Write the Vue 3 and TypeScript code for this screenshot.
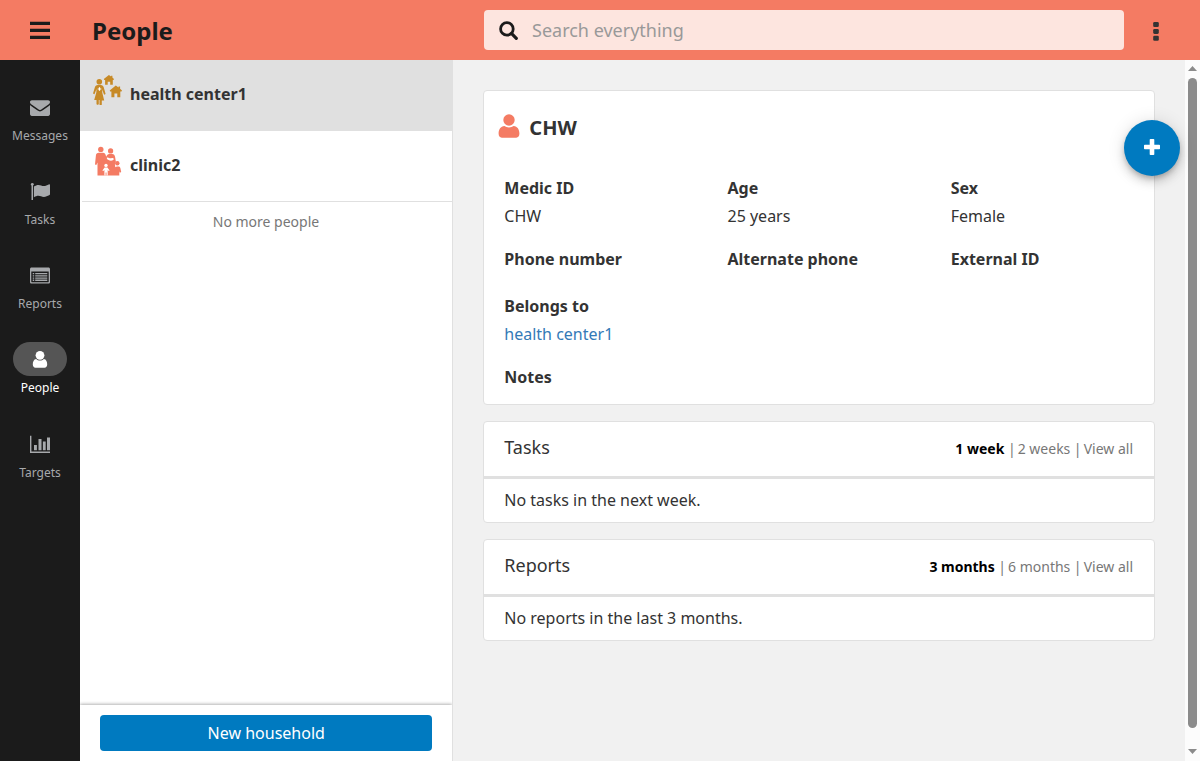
<script setup lang="ts">
interface NavItem { id: string; label: string }
interface Field { label: string; value?: string; link?: boolean }
interface Panel { title: string; filters: string[]; empty: string }

const nav: NavItem[] = [
  { id: 'messages', label: 'Messages' },
  { id: 'tasks', label: 'Tasks' },
  { id: 'reports', label: 'Reports' },
  { id: 'people', label: 'People' },
  { id: 'targets', label: 'Targets' },
]
const active = 'people'

const rows: Field[][] = [
  [
    { label: 'Medic ID', value: 'CHW' },
    { label: 'Age', value: '25 years' },
    { label: 'Sex', value: 'Female' },
  ],
  [{ label: 'Phone number' }, { label: 'Alternate phone' }, { label: 'External ID' }],
  [{ label: 'Belongs to', value: 'health center1', link: true }],
  [{ label: 'Notes' }],
]

const panels: Panel[] = [
  { title: 'Tasks', filters: ['1 week', '2 weeks', 'View all'], empty: 'No tasks in the next week.' },
  { title: 'Reports', filters: ['3 months', '6 months', 'View all'], empty: 'No reports in the last 3 months.' },
]
</script>

<template>
  <div class="app">
    <header class="header">
      <button class="menu" aria-label="Menu">
        <svg width="20" height="18" viewBox="0 0 20 18"><path d="M0 .7h20v3.200H0zM0 7.700h20v3.200H0zM0 14.700h20v3.200H0z" fill="#1b1b1b" /></svg>
      </button>
      <h1 class="title">People</h1>
      <div class="search">
        <svg width="20" height="20" viewBox="0 0 20 20" fill="none" stroke="#1b1b1b"><circle cx="7.900" cy="8.900" r="6.300" stroke-width="2.800" /><path d="M12.700 13.700l4.600 4.600" stroke-width="3.200" stroke-linecap="round" /></svg>
        <span class="placeholder">Search everything</span>
      </div>
      <button class="more" aria-label="More">
        <svg width="6" height="20" viewBox="0 0 6 20" fill="#333"><rect x=".2" y="1" width="5.600" height="5" rx="1.300" /><rect x=".2" y="7.900" width="5.600" height="5" rx="1.300" /><rect x=".2" y="14.800" width="5.600" height="5" rx="1.300" /></svg>
      </button>
    </header>

    <div class="body">
      <nav class="sidebar">
        <a v-for="item in nav" :key="item.id" class="nav-item" :class="{ active: item.id === active }">
          <span class="pill">
            <svg v-if="item.id === 'messages'" width="20" height="20" viewBox="0 0 20 20" fill="currentColor"><path d="M0 4.200C0 3 .8 2.300 1.900 2.300h16.200c1.100 0 1.900.7 1.900 1.800 0 1-.7 1.900-1.600 2.500l-6.400 4.500c-.7.500-1.300.9-2 .9s-1.300-.4-2-.9L1.600 6.600C.8 6 0 5.100 0 4.200zM0 6.900c.3.400.7.700 1.100 1l6.100 4.300c.9.700 1.800 1.200 2.800 1.200s1.900-.5 2.800-1.200l6.100-4.300c.4-.3.800-.6 1.100-1v9.200c0 1-.8 1.800-1.800 1.800H1.800c-1 0-1.800-.8-1.800-1.800z" /></svg>
            <svg v-else-if="item.id === 'tasks'" width="20" height="20" viewBox="0 0 20 20" fill="currentColor"><circle cx="2.300" cy="2.300" r="1.400" /><path d="M1.500 2.500h1.500v15.500h-1.500zM3.900 4.400c1.500-.9 3-1.500 4.600-1.500 2.100 0 3.300 1.200 5.200 1.200 1.800 0 3.600-1 5-1.700.8-.4 1.300 0 1.300.7v9c0 .7-.3.900-.9 1.200-1.500.8-3.300 1.600-5.200 1.600-2.300 0-3.400-1.200-5.600-1.200-1.400 0-2.600.5-4.400 1.500z" /></svg>
            <svg v-else-if="item.id === 'reports'" width="20" height="20" viewBox="0 0 20 20"><path fill="currentColor" fill-rule="evenodd" d="M1.600 1.500h16.800c.9 0 1.600.7 1.600 1.600v12.800c0 .9-.7 1.600-1.600 1.600H1.600C.7 17.500 0 16.800 0 15.900V3.100c0-.9.700-1.600 1.600-1.600zM1.300 5.500v10.200c0 .3.200.5.500.5h16.400c.3 0 .5-.2.500-.5V5.500zM2.700 7h1.500v1.300H2.700zM5.200 7h12.100v1.300H5.200zM2.700 9.200h1.500v1.300H2.700zM5.200 9.200h12.100v1.300H5.200zM2.700 11.400h1.500v1.300H2.700zM5.200 11.400h12.100v1.300H5.200zM2.700 13.600h1.500v1.300H2.700zM5.200 13.600h12.100v1.300H5.200z" /></svg>
            <svg v-else-if="item.id === 'people'" width="20" height="20" viewBox="0 0 20 20" fill="currentColor"><circle cx="10" cy="5.300" r="4.400" /><path d="M6.200 9.100C3.700 9.400 2.800 12 2.800 14.600c0 2 1.100 3.200 2.700 3.200h9c1.600 0 2.700-1.200 2.700-3.200 0-2.600-.9-5.200-3.400-5.500-1 1.100-2.300 1.500-3.800 1.500s-2.800-.4-3.800-1.500z" /></svg>
            <svg v-else width="20" height="20" viewBox="0 0 20 20" fill="currentColor"><path d="M0 .8h1.400v15.700H20v1.400H0zM4 10h2.900v5.200H4zM8.500 4h3v11.200h-3zM12.900 6.600h2.800v8.600h-2.800zM17 2.400h3v12.800h-3z" /></svg>
          </span>
          <span class="nav-label">{{ item.label }}</span>
        </a>
      </nav>

      <section class="list">
        <ul class="rows">
          <li class="row selected">
            <svg class="row-icon" width="30" height="30" viewBox="0 0 30 30" fill="#c78a27">
              <circle cx="7.300" cy="6.700" r="2.800" />
              <path d="M5.800 10h3c1.700 0 2.500.9 3 2.600l1.800 6.400-1.500.7-2-5.200.2 3.300 1.900 7.600H9.800v4.100c0 1-2.300 1-2.300 0V25h-.7v4.100c0 1-2.300 1-2.300 0V25H2.200l2.100-7.600.2-3.300-2 5.200-1.500-.7 1.800-6C3.300 10.900 4.100 10 5.800 10z" />
              <path d="M6.900 12.200h1.200v1.200h1.200v1.200H8.100v1.200H6.900v-1.200H5.700v-1.200h1.200z" fill="#fff" />
              <path d="M16.900 0l2.200 1.600V.8h1.300v1.700L22 4.100l-.5.900h-.7v4.800h-2.600V6.700h-2.500v3.100h-2.600V5h-.8l-.5-.9zM23.800 10.400l2.700 2v-1h1.600v2.300l1.900 1.800-.5 1h-1.200v5.800h-3v-3.700h-2.900v3.700h-3v-5.800h-1.200l-.5-1z" />
            </svg>
            <span>health center1</span>
          </li>
          <li class="row">
            <svg class="row-icon" width="30" height="30" viewBox="0 0 30 30">
              <g fill="#f47b63">
                <circle cx="8.800" cy="3.400" r="2.700" /><circle cx="18.600" cy="4.900" r="2.600" /><circle cx="25.300" cy="17.200" r="2.200" />
                <path d="M7 6.700h4c1.600 0 2.400.9 2.700 2.500l.7 1.500c.5-1.700 1.300-2.700 2.900-2.700h2.800c1.900 0 2.600 1 3 3l.8 5-1 1.900.4 3.400 1.500-.9h1.600c1.200 0 1.700.6 2 1.800l.8 3.900-1.300.6-.6-1.500v4.400H5.500v-13L4.300 19 3 18.500l.9-9C4.100 7.700 4.900 6.700 7 6.700z" />
              </g>
              <g fill="#fff"><circle cx="14" cy="19.400" r="1.700" /><path d="M12.600 21.500h2.800l2.200 3-.8.600-1.100-1.100v5.600h-1.200v-3h-.9v3h-1.200V24l-1.200 1.100-.8-.6z" /><path d="M14.900 11.600c1.700-.4 2.500.9 3.900.7l1.700-.3c1.500-.1 1.700 1.700.3 2.300-2.200 1.200-5-.3-5.900-1.500z" /></g>
            </svg>
            <span>clinic2</span>
          </li>
        </ul>
        <p class="no-more">No more people</p>
        <footer class="actions"><button class="new-btn">New household</button></footer>
      </section>

      <main class="content">
        <article class="card person">
          <div class="person-head">
            <svg width="22" height="24" viewBox="0 0 22 24" fill="#f47b63"><circle cx="11" cy="6" r="5.700" /><path d="M6.400 12C2.600 12.200.6 15.500.6 19.600c0 2.700 1.100 4.100 3.200 4.100h14.400c2.100 0 3.200-1.400 3.200-4.100 0-4.100-2-7.400-5.800-7.600-1.300.9-2.700 1.400-4.600 1.400s-3.300-.5-4.600-1.400z" /></svg>
            <h2>CHW</h2>
          </div>
          <div v-for="(row, i) in rows" :key="i" class="fields" :class="'fields-' + i">
            <div v-for="f in row" :key="f.label" class="field">
              <label>{{ f.label }}</label>
              <p v-if="f.value" :class="{ link: f.link }">{{ f.value }}</p>
            </div>
          </div>
        </article>

        <article v-for="p in panels" :key="p.title" class="card panel">
          <div class="panel-head">
            <h3>{{ p.title }}</h3>
            <div class="filters">
              <template v-for="(f, i) in p.filters" :key="f"><span v-if="i" class="sep">|</span><a :class="{ on: i === 0 }">{{ f }}</a></template>
            </div>
          </div>
          <p class="empty">{{ p.empty }}</p>
        </article>
      </main>

      <div class="scrollbar">
        <svg width="9" height="5" viewBox="0 0 9 5"><path d="M4.500 0L9 5H0z" fill="#8b8b8b" /></svg>
        <div class="thumb"></div>
        <svg width="9" height="5" viewBox="0 0 9 5"><path d="M0 0h9L4.500 5z" fill="#8b8b8b" /></svg>
      </div>
    </div>

    <button class="fab" aria-label="Add">
      <svg width="16" height="16" viewBox="0 0 16 16"><path d="M5.700.8q0-.8.800-.8h3q.8 0 .8.800v4.900h4.900q.8 0 .8.800v3q0 .8-.8.8h-4.900v4.900q0 .8-.8.8h-3q-.8 0-.8-.8v-4.900H.8q-.8 0-.8-.8v-3q0-.8.8-.8h4.900z" fill="#fff" /></svg>
    </button>
  </div>
</template>

<style>
html, body { margin: 0; overflow: hidden; }
</style>

<style scoped>
* { box-sizing: border-box; }
h1, h2, h3, p, ul { margin: 0; padding: 0; }
svg { display: block; flex: none; }
button { border: 0; padding: 0; background: none; font: inherit; color: inherit; }
.app { position: relative; width: 1200px; height: 761px; display: flex; flex-direction: column; overflow: hidden; font: 16px/22.86px "Noto Sans", sans-serif; color: #333; }
.header { height: 60px; flex: none; display: flex; align-items: center; background: #f47b63; }
.menu { width: 80px; display: flex; justify-content: center; }
.title { width: 404px; padding: 2px 0 0 12px; font-size: 24px; line-height: 34px; font-weight: 700; color: #1b1b1b; }
.search { width: 640px; height: 40px; display: flex; align-items: center; padding-left: 15px; gap: 13px; background: #fde5df; border-radius: 4px; }
.placeholder { font-size: 18px; color: #999; }
.more { width: 64px; display: flex; justify-content: center; padding-top: 2px; }
.body { flex: 1; min-height: 0; display: flex; }
.sidebar { width: 80px; flex: none; padding-top: 30px; background: #1b1b1b; }
.nav-item { height: 84.14px; display: flex; flex-direction: column; align-items: center; color: #a7a9ac; }
.pill { width: 54px; height: 34px; display: flex; align-items: center; justify-content: center; padding-top: 2px; border-radius: 17px; }
.nav-label { margin-top: 3px; font-size: 12px; line-height: 17.14px; }
.active { color: #fff; }
.active .pill { background: #555; }
.list { width: 373px; flex: none; display: flex; flex-direction: column; background: #fff; border-right: 1px solid #e0e0e0; }
.rows { list-style: none; }
.row { height: 71px; display: flex; align-items: center; padding: 0 0 3px 12px; gap: 8px; font-weight: 700; box-shadow: inset 0 -1px #e0e0e0; }
.row:last-child { margin-left: 2px; padding-left: 10px; }
.row-icon { margin-bottom: 8px; }
.selected { background: #e0e0e0; }
.no-more { margin-top: 10px; text-align: center; font-size: 14px; line-height: 20px; color: #777; }
.actions { height: 56px; margin-top: auto; padding: 10px 20px; box-shadow: 0 -1px 3px rgba(0, 0, 0, .3); clip-path: inset(-5px 0 0 0); }
.new-btn { width: 100%; height: 36px; padding-left: .5px; background: #007ac0; color: #fff; border-radius: 4px; }
.content { flex: 1; min-width: 0; padding: 30px 30px 0; background: #f1f1f1; }
.card { background: #fff; border: 1px solid #e0e0e0; border-radius: 4px; }
.person { height: 315px; }
.person-head { height: 73px; display: flex; align-items: center; gap: 9.300px; padding-left: 14px; }
.person-head svg { margin-bottom: 3px; }
h2 { font-size: 20px; line-height: 28px; font-weight: 700; }
.fields { display: grid; grid-template-columns: 223.2px 223.2px 1fr; padding-left: 20.3px; }
.fields-0 { margin-top: 13px; height: 71px; }
.fields-1 { height: 47px; }
.fields-2 { height: 71px; }
.field label { display: block; font-weight: 700; }
.field p { margin-top: 5px; }
.link { color: #337ab7; }
.panel { height: 102px; margin-top: 16px; }
.panel-head { height: 57px; display: flex; align-items: center; justify-content: space-between; padding: 0 21px 0 20.3px; border-bottom: 3px solid #e0e0e0; }
h3 { font-size: 18px; line-height: 26px; font-weight: 400; margin-bottom: 4px; }
.filters { font-size: 14px; line-height: 20px; color: #777; }
.filters .on { font-weight: 700; color: #000; }
.sep { padding: 0 2.100px 0 3.500px; }
.empty { padding: 10px 20.3px; }
.scrollbar { width: 15px; flex: none; display: flex; flex-direction: column; align-items: center; padding: 6px 0 7px; background: #fcfcfc; }
.thumb { width: 9px; height: 650px; margin: 7px 0 auto; border-radius: 4.500px; background: #8b8b8b; }
.fab { position: absolute; left: 1124px; top: 120px; width: 56px; height: 56px; display: flex; align-items: center; justify-content: center; padding-bottom: 2px; border-radius: 50%; background: #007ac0; box-shadow: 0 3px 5px -1px rgba(0, 0, 0, .2), 0 6px 10px rgba(0, 0, 0, .14), 0 1px 18px rgba(0, 0, 0, .12); }
</style>
